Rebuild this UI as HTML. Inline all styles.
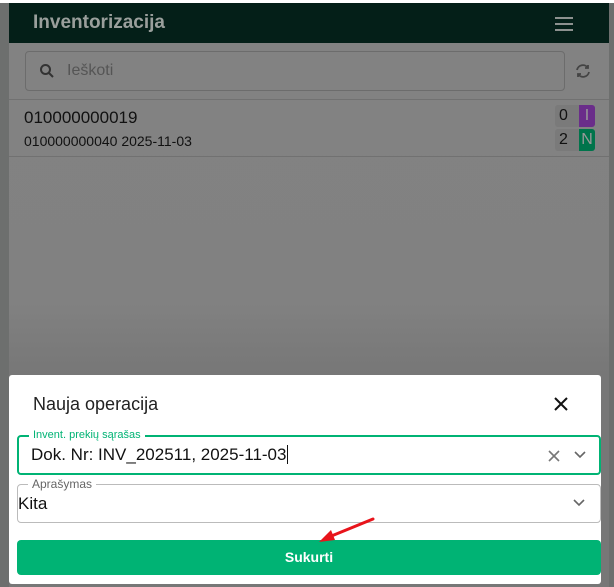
<!DOCTYPE html>
<html><head><meta charset="utf-8"><style>
*{box-sizing:border-box;margin:0;padding:0}
body{width:614px;height:587px;overflow:hidden;background:#6d6f6e;font-family:"Liberation Sans",sans-serif;position:relative}
.app{position:absolute;left:9px;top:3px;width:600px;height:584px;background:linear-gradient(#828282,#818181 300px,#777 370px)}
.top{position:absolute;left:0;top:0;width:614px;height:3px;background:#fff}
.hdr{position:absolute;left:9px;top:3px;width:600px;height:40px;background:#041f18;color:#9a9f9c;font-size:19px;font-weight:bold;padding:9px 0 0 24px}
.ham{position:absolute;right:36px;top:14px;width:18px}
.ham i{display:block;height:2px;background:#8d918f;margin-bottom:4px}
.search{position:absolute;left:25px;top:51px;width:540px;height:40px;border:1px solid #6c6c6c;border-radius:4px;color:#555;font-size:16px;padding:10px 0 0 41px}
.row{position:absolute;left:9px;top:99px;width:600px;height:58px;border-top:1px solid #717171;border-bottom:1px solid #717171}
.t1{position:absolute;left:15px;top:8px;font-size:17px;color:#111}
.t2{position:absolute;left:15px;top:33px;font-size:14px;color:#111}
.b{position:absolute;width:40px;height:22px;background:#7a7a7a;border-radius:3px;font-size:16px;color:#111}
.b span{position:absolute;left:4px;top:2px}
.b em{position:absolute;right:0;top:0;width:16px;height:22px;color:#999;font-style:normal;text-align:center;line-height:22px;border-radius:0 3px 3px 0}
.modal{position:absolute;left:9px;top:375px;width:592px;height:209px;background:#fff;border-radius:3px}
.title{position:absolute;left:24px;top:19px;font-size:18px;color:#222}
.fld{position:absolute;left:8px;width:584px;border-radius:4px}
.lab{position:absolute;left:10px;top:-8px;background:#fff;padding:0 4px;font-size:11px}
.val{position:absolute;font-size:16px;color:#111}
.btn{position:absolute;left:8px;top:165px;width:584px;height:35px;background:#00b374;border-radius:4px;color:#fff;font-size:14px;font-weight:bold;text-align:center;line-height:35px}
</style></head><body>
<div class="top"></div>
<div class="app"></div>
<div class="hdr">Inventorizacija<div class="ham"><i></i><i></i><i></i></div></div>
<div class="search">Ieškoti
<svg style="position:absolute;left:13px;top:11px" width="16" height="16" viewBox="0 0 16 16"><circle cx="6.5" cy="6.5" r="4.5" fill="none" stroke="#333" stroke-width="2"/><path d="M10 10l4 4" stroke="#333" stroke-width="2"/></svg></div>
<svg style="position:absolute;left:574px;top:62px" width="18" height="18" viewBox="0 0 18 18" fill="none" stroke="#444" stroke-width="1.8"><path d="M3 8a6 6 0 0 1 11-2M15 10a6 6 0 0 1-11 2"/><path d="M14 3v3h-3M4 15v-3h3"/></svg>
<div class="row">
<div class="t1">010000000019</div>
<div class="t2">010000000040 2025-11-03</div>
<div class="b" style="left:546px;top:5px"><span>0</span><em style="background:#6a2d8a">I</em></div>
<div class="b" style="left:546px;top:29px"><span>2</span><em style="background:#00744b">N</em></div>
</div>
<div class="modal">
<div class="title">Nauja operacija</div>
<svg style="position:absolute;left:545px;top:22px" width="14" height="14" viewBox="0 0 14 14"><path d="M1 1l12 12M13 1L1 13" stroke="#111" stroke-width="2"/></svg>
<div class="fld" style="top:60px;height:40px;border:2px solid #00b374">
<div class="lab" style="color:#00b374">Invent. prekių sąrašas</div>
<div class="val" style="top:8px;left:12px;font-size:17px">Dok. Nr: INV_202511, 2025-11-03<span style="border-left:1px solid #111;margin-left:1px"></span></div>
<svg style="position:absolute;left:529px;top:13px" width="12" height="12" viewBox="0 0 12 12"><path d="M1 1l10 10M11 1L1 11" stroke="#777" stroke-width="1.6"/></svg>
<svg style="position:absolute;left:555px;top:14px" width="12" height="8" viewBox="0 0 12 8"><path d="M1 1l5 5 5-5" fill="none" stroke="#666" stroke-width="1.6"/></svg>
</div>
<div class="fld" style="top:109px;height:39px;border:1px solid #bbb">
<div class="lab" style="color:#666;font-size:12px">Aprašymas</div>
<div class="val" style="top:9px;left:0px;font-size:17px">Kita</div>
<svg style="position:absolute;left:555px;top:14px" width="12" height="8" viewBox="0 0 12 8"><path d="M1 1l5 5 5-5" fill="none" stroke="#666" stroke-width="1.6"/></svg>
</div>
<div class="btn">Sukurti</div>
<svg style="position:absolute;left:300px;top:140px" width="70" height="30" viewBox="0 0 70 30"><path d="M64 4L20 22" stroke="#e8141b" stroke-width="3" stroke-linecap="round"/><path d="M10 27L22 15L26 25Z" fill="#e8141b"/></svg>
</div>
</body></html>
